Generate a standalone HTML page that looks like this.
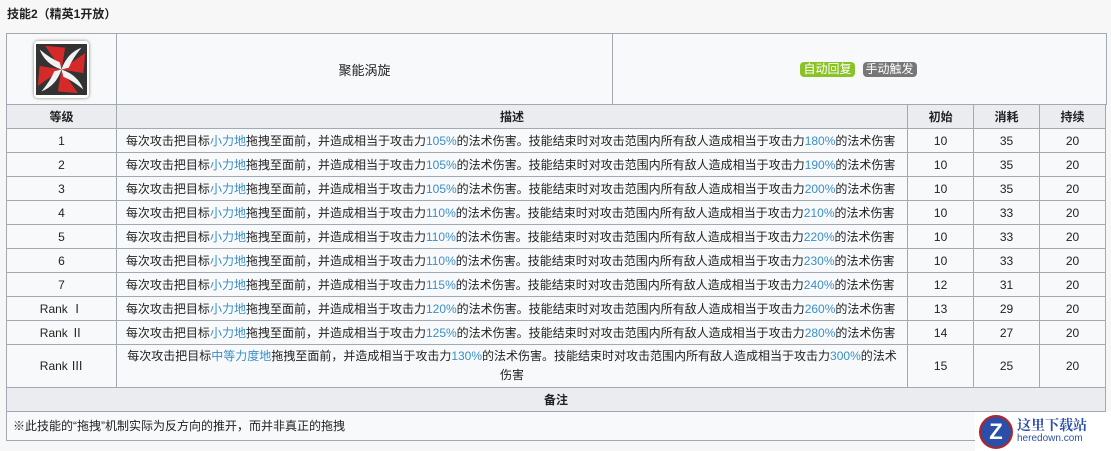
<!DOCTYPE html>
<html><head><meta charset="utf-8"><style>
body{margin:0;background:#f7f7f8;font-family:"Liberation Sans","Noto Sans CJK SC",sans-serif;font-size:12px;color:#222;width:1111px;height:451px;overflow:hidden;position:relative}
.t{position:absolute;left:7px;top:5px;font-weight:bold;font-size:12px}
table{position:absolute;left:6px;width:1100px;border-collapse:collapse;background:#f8f9fa}
td,th{border:1px solid #a2a9b1;padding:0 4px;text-align:center;height:23px;line-height:16px}
th{background:#eaecf0;font-weight:bold}
.d{text-align:left;padding-left:9px}
b{font-weight:normal;color:#3a8fc7}
.tag{display:inline-block;color:#fff;padding:0 3px;border-radius:4px;line-height:15px;font-size:12px}
</style></head><body>
<div class="t">技能2（精英1开放）</div>
<div style="position:absolute;left:6px;top:33px;width:1099px;height:71px;background:#f8f9fa;border:1px solid #a2a9b1;border-bottom:none"></div>
<div style="position:absolute;left:116px;top:34px;width:495px;height:70px;border-left:1px solid #a2a9b1;border-right:1px solid #a2a9b1;display:flex;align-items:center;justify-content:center;font-size:13px">聚能涡旋</div>
<div style="position:absolute;left:34px;top:41px;width:55px;height:57px;border-radius:4px;background:#fff;box-shadow:0 0 3px rgba(0,0,0,.5)">
<svg width="51" height="53" viewBox="0 0 56 56" style="display:block;margin:2px"><rect width="56" height="56" fill="#333"/><path d="M28 28 L10 2 L32 4Z M28 28 L54 10 L52 32Z M28 28 L46 54 L24 52Z M28 28 L2 46 L4 24Z" fill="#d42a2a"/><path d="M28 28 Q34 10 50 4 Q40 16 36 26Z M28 28 Q46 34 52 50 Q40 40 30 36Z M28 28 Q22 46 6 52 Q16 40 20 30Z M28 28 Q10 22 4 6 Q16 16 26 20Z" fill="#f2f2f2"/></svg></div>
<div style="position:absolute;left:612px;top:34px;width:493px;height:70px;display:flex;align-items:center;justify-content:center;gap:8px"><span class="tag" style="background:#8bc326">自动回复</span><span class="tag" style="background:#777">手动触发</span></div>
<table style="top:104px">
<colgroup><col style="width:110px"><col style="width:792px"><col style="width:66px"><col style="width:66px"><col style="width:66px"></colgroup>
<tr><th>等级</th><th>描述</th><th>初始</th><th>消耗</th><th>持续</th></tr>
<tr><td>1</td><td class="d">每次攻击把目标<b>小力地</b>拖拽至面前，并造成相当于攻击力<b>105%</b>的法术伤害。技能结束时对攻击范围内所有敌人造成相当于攻击力<b>180%</b>的法术伤害</td><td>10</td><td>35</td><td>20</td></tr>
<tr><td>2</td><td class="d">每次攻击把目标<b>小力地</b>拖拽至面前，并造成相当于攻击力<b>105%</b>的法术伤害。技能结束时对攻击范围内所有敌人造成相当于攻击力<b>190%</b>的法术伤害</td><td>10</td><td>35</td><td>20</td></tr>
<tr><td>3</td><td class="d">每次攻击把目标<b>小力地</b>拖拽至面前，并造成相当于攻击力<b>105%</b>的法术伤害。技能结束时对攻击范围内所有敌人造成相当于攻击力<b>200%</b>的法术伤害</td><td>10</td><td>35</td><td>20</td></tr>
<tr><td>4</td><td class="d">每次攻击把目标<b>小力地</b>拖拽至面前，并造成相当于攻击力<b>110%</b>的法术伤害。技能结束时对攻击范围内所有敌人造成相当于攻击力<b>210%</b>的法术伤害</td><td>10</td><td>33</td><td>20</td></tr>
<tr><td>5</td><td class="d">每次攻击把目标<b>小力地</b>拖拽至面前，并造成相当于攻击力<b>110%</b>的法术伤害。技能结束时对攻击范围内所有敌人造成相当于攻击力<b>220%</b>的法术伤害</td><td>10</td><td>33</td><td>20</td></tr>
<tr><td>6</td><td class="d">每次攻击把目标<b>小力地</b>拖拽至面前，并造成相当于攻击力<b>110%</b>的法术伤害。技能结束时对攻击范围内所有敌人造成相当于攻击力<b>230%</b>的法术伤害</td><td>10</td><td>33</td><td>20</td></tr>
<tr><td>7</td><td class="d">每次攻击把目标<b>小力地</b>拖拽至面前，并造成相当于攻击力<b>115%</b>的法术伤害。技能结束时对攻击范围内所有敌人造成相当于攻击力<b>240%</b>的法术伤害</td><td>12</td><td>31</td><td>20</td></tr>
<tr><td>Rank Ⅰ</td><td class="d">每次攻击把目标<b>小力地</b>拖拽至面前，并造成相当于攻击力<b>120%</b>的法术伤害。技能结束时对攻击范围内所有敌人造成相当于攻击力<b>260%</b>的法术伤害</td><td>13</td><td>29</td><td>20</td></tr>
<tr><td>Rank Ⅱ</td><td class="d">每次攻击把目标<b>小力地</b>拖拽至面前，并造成相当于攻击力<b>125%</b>的法术伤害。技能结束时对攻击范围内所有敌人造成相当于攻击力<b>280%</b>的法术伤害</td><td>14</td><td>27</td><td>20</td></tr>
<tr style="height:42px"><td>Rank Ⅲ</td><td style="padding:2px 9px;line-height:19px">每次攻击把目标<b>中等力度地</b>拖拽至面前，并造成相当于攻击力<b>130%</b>的法术伤害。技能结束时对攻击范围内所有敌人造成相当于攻击力<b>300%</b>的法术伤害</td><td>15</td><td>25</td><td>20</td></tr>
<tr><th colspan="5">备注</th></tr>
<tr style="height:29px"><td colspan="5" class="d" style="padding-left:6px">※此技能的“拖拽”机制实际为反方向的推开，而并非真正的拖拽</td></tr>
</table>
<div style="position:absolute;left:975px;top:412px;width:136px;height:39px;background:#fff;display:flex;align-items:center">
<div style="width:30px;height:30px;border-radius:50%;background:#2b4ea8;color:#fff;font-weight:bold;font-size:22px;text-align:center;line-height:30px;margin:0 4px;border:2px solid #b22">Z</div>
<div style="line-height:14px"><div style="color:#2b4ea8;font-weight:bold;font-size:14px;font-family:'Noto Serif CJK SC',serif">这里下载站</div><div style="font-size:10px;color:#2b4ea8">heredown.com</div></div></div>
</body></html>
